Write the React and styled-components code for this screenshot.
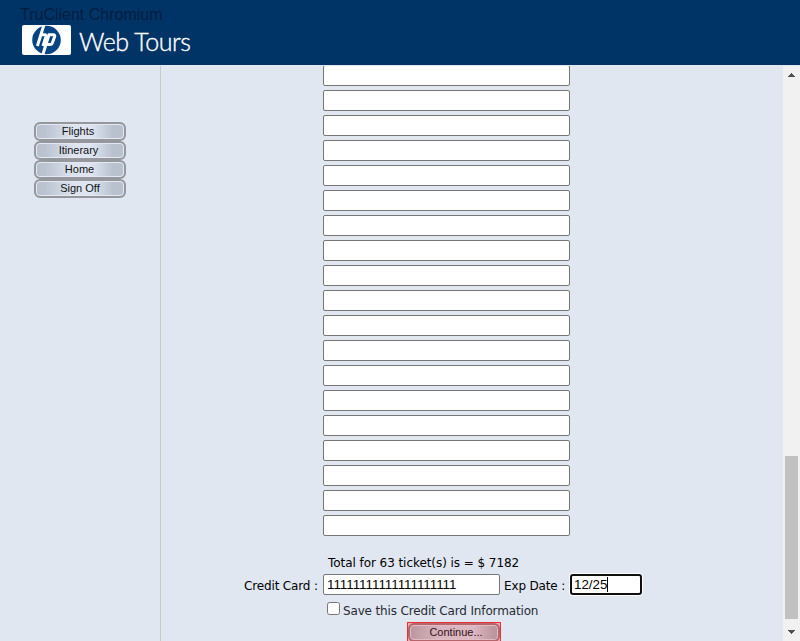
import React, { useState } from "react";
import styled, { createGlobalStyle } from "styled-components";

const GlobalStyle = createGlobalStyle`
  * { box-sizing: border-box; }
  body { margin: 0; background: #e0e7f1; overflow: hidden; }
`;

const Page = styled.div`
  width: 800px;
  height: 641px;
  display: flex;
  flex-direction: column;
  background: #e0e7f1;
  color: #000;
  overflow: hidden;
`;

const Header = styled.header`
  height: 65px;
  flex: none;
  background: #003366;
  padding: 5px 0 0 20px;
`;

const WindowTitle = styled.div`
  height: 20px;
  font: 16px/20px "Liberation Sans", Arial, sans-serif;
  color: #001e42;
`;

const Brand = styled.div`
  display: flex;
  padding-left: 2px;
  height: 30px;
`;

const Logo = styled.svg`
  width: 49px;
  height: 30px;
  flex: none;
`;

const BrandName = styled.span`
  margin-left: 8px;
  font: 300 25px/32px Lato, sans-serif;
  -webkit-text-stroke: 0.35px #fff;
  letter-spacing: -0.45px;
  color: #fff;
  white-space: nowrap;
`;

const Body = styled.div`
  display: flex;
  height: 576px;
  padding-top: 1px;
`;

const Sidebar = styled.nav`
  width: 161px;
  flex: none;
  border-right: 1px solid #c9c9c9;
  padding: 56px 0 0 34px;
`;

const PillButton = styled.button`
  display: block;
  width: 92px;
  height: 19px;
  margin: 0;
  padding: 0 ${(p) => p.$shift || 0}px 0 0;
  border: 2px solid #94979b;
  border-radius: 6px;
  background: linear-gradient(90deg, #b7bfcd 0%, #bcc4d2 12%, #dde4ef 42%, #dfe6f1 62%, #b9c1cf 88%, #b9c1cf 100%);
  box-shadow: inset 0 0 0 1px #e4e9f1;
  color: #111;
  font: 11px/15px "Liberation Sans", Arial, sans-serif;
  text-align: center;
  white-space: nowrap;
`;

const Main = styled.main`
  flex: 1;
  min-width: 0;
  overflow: hidden;
`;

const PassengerList = styled.div`
  display: flex;
  flex-direction: column;
  gap: 4px;
  margin: -1px 0 0 162px;
`;

const Field = styled.input`
  display: block;
  flex: none;
  width: ${(p) => p.$width}px;
  height: 21px;
  margin: 0;
  padding: 1px 3px 2px;
  border: 1px solid #767676;
  border-radius: 2px;
  outline: none;
  background: #fff;
  color: #000;
  font: 13.333px "Liberation Sans", Arial, sans-serif;
`;

const FocusedField = styled.div`
  width: 72px;
  height: 21px;
  display: flex;
  align-items: center;
  border: 2px solid #101010;
  border-radius: 3px;
  box-shadow: 0 0 0 1px #fff;
  background: #fff;
  padding: 0 0 0 2px;
  font: 13.333px/17px "Liberation Sans", Arial, sans-serif;
`;

const Caret = styled.span`
  width: 1px;
  height: 15px;
  background: #000;
`;

const Label = styled.span`
  display: block;
  flex: none;
  width: ${(p) => (p.$width ? `${p.$width}px` : "auto")};
  padding-left: ${(p) => p.$inset || 0}px;
  font: 12px/20px Verdana, "DejaVu Sans", sans-serif;
  letter-spacing: ${(p) => p.$spacing ?? -0.15}px;
  color: ${(p) => p.$color || "#000"};
  white-space: nowrap;
`;

const Total = styled.div`
  margin: 17px 0 0 167px;
  height: 21px;
`;

const CardRow = styled.div`
  display: flex;
  height: 21px;
  margin-left: 83px;

  & > ${Label} {
    padding-top: 2px;
  }
`;

const SaveRow = styled.div`
  display: flex;
  margin: 5px 0 0 166px;
  height: 21px;

  & > ${Label} {
    padding-top: 1px;
  }
`;

const Checkbox = styled.input`
  appearance: none;
  flex: none;
  width: 13px;
  height: 13px;
  margin: 2px 3px 0 0;
  border: 1px solid #767676;
  border-radius: 2.5px;
  background: #fff;
  &:checked { background: #1769d2; }
`;

const ContinueFrame = styled.div`
  width: 94px;
  height: 21px;
  margin: 1px 0 0 246px;
  background: #ecaab0;
  border: 1px solid #ee3035;
`;

const ContinueButton = styled(PillButton)`
  border-color: #b5666d;
  background: linear-gradient(90deg, #bb959e 0%, #c39fa8 10%, #dab5bf 35%, #dcb8c2 72%, #bd969f 95%, #b9929b 100%);
  box-shadow: inset 0 0 0 1px #e0bcc5;
  padding-left: 4px;
  color: #321217;
`;

const Scrollbar = styled.div`
  width: 17px;
  flex: none;
  height: 575px;
  background: #f1f1f1;
  display: flex;
  flex-direction: column;
  align-items: center;
`;

const Arrow = styled.svg`
  width: 17px;
  height: 17px;
  flex: none;
`;

const Thumb = styled.div`
  width: 13px;
  height: 163px;
  margin: 373px 0 5px;
  background: #c1c1c1;
`;

function HpLogo() {
  return (
    <Logo viewBox="0 0 49 30" aria-label="hp">
      <rect width="49" height="30" rx="2" fill="#fff" />
      <circle cx="24.5" cy="15" r="14.3" fill="#064583" />
      <g fill="none" stroke="#fff" strokeWidth="3">
        <path d="M22.2-1 15.4 21M18.3 9.8h4.4q1.7 0 1.2 1.8L21 21" />
        <path d="M20.4 31 27 9.8h4.3q1.9 0 1.3 2L30.3 18q-.5 1.6-2.2 1.6h-3.6" />
      </g>
    </Logo>
  );
}

export default function App() {
  const [card, setCard] = useState("1".repeat(20));
  const [saved, setSaved] = useState(false);
  return (
    <>
      <GlobalStyle />
      <Page>
        <Header>
          <WindowTitle>TruClient Chromium</WindowTitle>
          <Brand>
            <HpLogo />
            <BrandName>Web Tours</BrandName>
          </Brand>
        </Header>
        <Body>
          <Sidebar>
            <PillButton $shift={4}>Flights</PillButton>
            <PillButton $shift={3}>Itinerary</PillButton>
            <PillButton $shift={1}>Home</PillButton>
            <PillButton>Sign Off</PillButton>
          </Sidebar>
          <Main>
            <PassengerList>
              {Array.from({ length: 19 }, (_, i) => (
                <Field key={i} $width={247} />
              ))}
            </PassengerList>
            <Total>
              <Label $spacing={-0.06}>Total for 63 ticket(s) is = $ 7182</Label>
            </Total>
            <CardRow>
              <Label $width={79}>Credit Card :</Label>
              <Field $width={177} value={card} onChange={(e) => setCard(e.target.value)} />
              <Label $width={70} $inset={4}>Exp Date :</Label>
              <FocusedField>12/25<Caret /></FocusedField>
            </CardRow>
            <SaveRow>
              <Checkbox type="checkbox" checked={saved} onChange={(e) => setSaved(e.target.checked)} />
              <Label $color="#262a31">Save this Credit Card Information</Label>
            </SaveRow>
            <ContinueFrame>
              <ContinueButton>Continue...</ContinueButton>
            </ContinueFrame>
          </Main>
          <Scrollbar>
            <Arrow viewBox="0 0 17 17" shapeRendering="crispEdges">
              <path d="M5 11h7v-1h-1V9h-1V8H9V7H8v1H7v1H6v1H5z" fill="#505050" />
            </Arrow>
            <Thumb />
            <Arrow viewBox="0 0 17 17" shapeRendering="crispEdges">
              <path d="M5 6h7v1h-1v1h-1v1H9v1H8V9H7V8H6V7H5z" fill="#505050" />
            </Arrow>
          </Scrollbar>
        </Body>
      </Page>
    </>
  );
}
